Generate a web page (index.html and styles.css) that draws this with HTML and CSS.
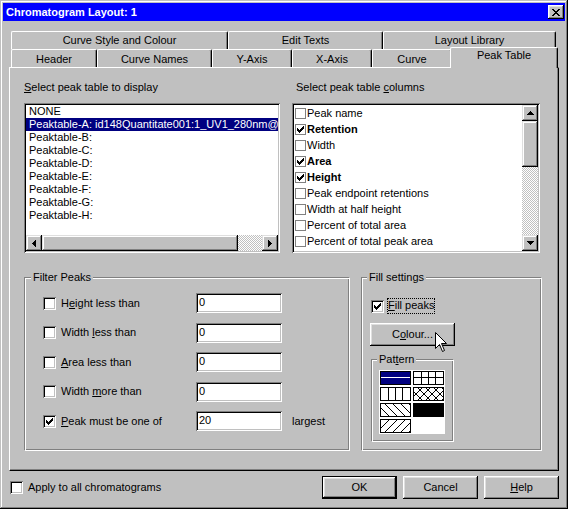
FILE: index.html
```html
<!DOCTYPE html>
<html>
<head>
<meta charset="utf-8">
<title>Chromatogram Layout: 1</title>
<link rel="stylesheet" href="styles.css">
</head>
<body>
<div class="window">
  <div class="titlebar">
    <span class="title">Chromatogram Layout: 1</span>
    <span class="close"><svg width="8" height="7" viewBox="0 0 8 7"><path d="M0 0h2v1H0zM6 0h2v1H6zM1 1h2v1H1zM5 1h2v1H5zM2 2h4v1H2zM3 3h2v1H3zM2 4h4v1H2zM1 5h2v1H1zM5 5h2v1H5zM0 6h2v1H0zM6 6h2v1H6z" fill="#000"/></svg></span>
  </div>
  <div class="content">
    <div class="tabs">
      <div class="tabrow back">
        <div class="tab w-cs">Curve Style and Colour</div>
        <div class="tab w-et">Edit Texts</div>
        <div class="tab w-ll">Layout Library</div>
      </div>
      <div class="tabrow front">
        <div class="tab w-hd">Header</div>
        <div class="tab w-cn">Curve Names</div>
        <div class="tab w-ax">Y-Axis</div>
        <div class="tab w-ax">X-Axis</div>
        <div class="tab w-ax">Curve</div>
        <div class="tab w-pt sel">Peak Table</div>
      </div>
    </div>
    <div class="panel">
      <div class="lists">
        <div class="col">
          <div class="lbl"><u>S</u>elect peak table to display</div>
          <div class="listbox">
            <div class="items">
              <div class="item">NONE</div>
              <div class="item hl">Peaktable-A: id148Quantitate001:1_UV1_280nm@01</div>
              <div class="item">Peaktable-B:</div>
              <div class="item">Peaktable-C:</div>
              <div class="item">Peaktable-D:</div>
              <div class="item">Peaktable-E:</div>
              <div class="item">Peaktable-F:</div>
              <div class="item">Peaktable-G:</div>
              <div class="item">Peaktable-H:</div>
            </div>
            <div class="hscroll">
              <span class="sbtn"><svg width="4" height="7" viewBox="0 0 4 7"><path d="M0 3h1v1H0zM1 2h1v3H1zM2 1h1v5H2zM3 0h1v7H3z"/></svg></span>
              <span class="thumb hthumb"></span>
              <span class="track"></span>
              <span class="sbtn"><svg width="4" height="7" viewBox="0 0 4 7"><path d="M0 0h1v7H0zM1 1h1v5H1zM2 2h1v3H2zM3 3h1v1H3z"/></svg></span>
            </div>
          </div>
        </div>
        <div class="col">
          <div class="lbl lbl-r">Select peak table <u>c</u>olumns</div>
          <div class="listbox rowbox">
            <div class="items">
              <div class="citem"><span class="mini"></span>Peak name</div>
              <div class="citem b"><span class="mini"><svg width="7" height="7" viewBox="0 0 7 7"><path d="M6 0h1v1H6zM5 1h2v1H5zM0 2h1v1H0zM4 2h3v1H4zM0 3h2v1H0zM3 3h3v1H3zM0 4h5v1H0zM1 5h3v1H1zM2 6h1v1H2z"/></svg></span>Retention</div>
              <div class="citem"><span class="mini"></span>Width</div>
              <div class="citem b"><span class="mini"><svg width="7" height="7" viewBox="0 0 7 7"><path d="M6 0h1v1H6zM5 1h2v1H5zM0 2h1v1H0zM4 2h3v1H4zM0 3h2v1H0zM3 3h3v1H3zM0 4h5v1H0zM1 5h3v1H1zM2 6h1v1H2z"/></svg></span>Area</div>
              <div class="citem b"><span class="mini"><svg width="7" height="7" viewBox="0 0 7 7"><path d="M6 0h1v1H6zM5 1h2v1H5zM0 2h1v1H0zM4 2h3v1H4zM0 3h2v1H0zM3 3h3v1H3zM0 4h5v1H0zM1 5h3v1H1zM2 6h1v1H2z"/></svg></span>Height</div>
              <div class="citem"><span class="mini"></span>Peak endpoint retentions</div>
              <div class="citem"><span class="mini"></span>Width at half height</div>
              <div class="citem"><span class="mini"></span>Percent of total area</div>
              <div class="citem"><span class="mini"></span>Percent of total peak area</div>
            </div>
            <div class="vscroll">
              <span class="sbtn"><svg width="7" height="4" viewBox="0 0 7 4"><path d="M3 0h1v1H3zM2 1h3v1H2zM1 2h5v1H1zM0 3h7v1H0z"/></svg></span>
              <span class="thumb vthumb"></span>
              <span class="track"></span>
              <span class="sbtn"><svg width="7" height="4" viewBox="0 0 7 4"><path d="M0 0h7v1H0zM1 1h5v1H1zM2 2h3v1H2zM3 3h1v1H3z"/></svg></span>
            </div>
          </div>
        </div>
      </div>
      <div class="groups">
        <fieldset class="group filter">
          <legend>Filter Peaks</legend>
          <div class="filters">
            <span class="cb"></span><span>H<u>e</u>ight less than</span><span class="field">0</span><span></span>
            <span class="cb"></span><span>Width <u>l</u>ess than</span><span class="field">0</span><span></span>
            <span class="cb"></span><span><u>A</u>rea less than</span><span class="field">0</span><span></span>
            <span class="cb"></span><span>Width <u>m</u>ore than</span><span class="field">0</span><span></span>
            <span class="cb"><svg width="7" height="7" viewBox="0 0 7 7"><path d="M6 0h1v1H6zM5 1h2v1H5zM0 2h1v1H0zM4 2h3v1H4zM0 3h2v1H0zM3 3h3v1H3zM0 4h5v1H0zM1 5h3v1H1zM2 6h1v1H2z"/></svg></span><span><u>P</u>eak must be one of</span><span class="field">20</span><span class="unit">largest</span>
          </div>
        </fieldset>
        <fieldset class="group fill">
          <legend>Fill settings</legend>
          <div class="fillrow">
            <span class="cb"><svg width="7" height="7" viewBox="0 0 7 7"><path d="M6 0h1v1H6zM5 1h2v1H5zM0 2h1v1H0zM4 2h3v1H4zM0 3h2v1H0zM3 3h3v1H3zM0 4h5v1H0zM1 5h3v1H1zM2 6h1v1H2z"/></svg></span>
            <span class="focus"><u>F</u>ill peaks</span>
          </div>
          <div class="btn colour">C<u>o</u>lour...
            <svg class="cursor" width="12" height="20" viewBox="0 0 12 20"><path d="M0.5 0.5V16.5L4.5 12.5L7.5 19.5L9.5 18.5L6.5 11.5H11.5Z" fill="#fff" stroke="#000" stroke-width="1"/></svg>
          </div>
          <fieldset class="group pattern">
            <legend>Pat<u>t</u>ern</legend>
            <div class="pgrid">
              <svg class="pc" width="31" height="14" viewBox="0 0 31 14"><rect x="0" y="0" width="31" height="14" fill="#000"/><rect x="1" y="1" width="29" height="12" fill="#000080"/><rect x="1" y="6" width="29" height="1" fill="#fff"/></svg>
              <svg class="pc" width="31" height="14" viewBox="0 0 31 14"><rect x="0.5" y="0.5" width="30" height="13" fill="#fff" stroke="#000"/><path d="M1 6.5H30M8.5 1V13M15.5 1V13M22.5 1V13" stroke="#000"/></svg>
              <svg class="pc" width="31" height="14" viewBox="0 0 31 14"><rect x="0.5" y="0.5" width="30" height="13" fill="#fff" stroke="#000"/><path d="M8.5 1V13M15.5 1V13M22.5 1V13" stroke="#000"/></svg>
              <svg class="pc" width="31" height="14" viewBox="0 0 31 14"><defs><clipPath id="c4"><rect x="1" y="1" width="29" height="12"/></clipPath></defs><rect x="0.5" y="0.5" width="30" height="13" fill="#fff" stroke="#000"/><g clip-path="url(#c4)" stroke="#000" shape-rendering="crispEdges"><path d="M-12 14L2 0M-4 14L10 0M4 14L18 0M12 14L26 0M20 14L34 0M28 14L42 0"/><path d="M-12 0L2 14M-4 0L10 14M4 0L18 14M12 0L26 14M20 0L34 14M28 0L42 14"/></g></svg>
              <svg class="pc" width="31" height="14" viewBox="0 0 31 14"><defs><clipPath id="c5"><rect x="1" y="1" width="29" height="12"/></clipPath></defs><rect x="0.5" y="0.5" width="30" height="13" fill="#fff" stroke="#000"/><g clip-path="url(#c5)" stroke="#000" shape-rendering="crispEdges"><path d="M-12 0L2 14M-4 0L10 14M4 0L18 14M12 0L26 14M20 0L34 14M28 0L42 14"/></g></svg>
              <svg class="pc" width="31" height="14" viewBox="0 0 31 14"><rect x="0" y="0" width="31" height="14" fill="#000"/></svg>
              <svg class="pc" width="31" height="14" viewBox="0 0 31 14"><defs><clipPath id="c7"><rect x="1" y="1" width="29" height="12"/></clipPath></defs><rect x="0.5" y="0.5" width="30" height="13" fill="#fff" stroke="#000"/><g clip-path="url(#c7)" stroke="#000" shape-rendering="crispEdges"><path d="M-12 14L2 0M-4 14L10 0M4 14L18 0M12 14L26 0M20 14L34 0M28 14L42 0"/></g></svg>
            </div>
          </fieldset>
        </fieldset>
      </div>
    </div>
    <div class="footer">
      <span class="cb"></span>
      <span class="apply">Apply to all chromatograms</span>
      <span class="spacer"></span>
      <span class="btn default">OK</span>
      <span class="btn">Cancel</span>
      <span class="btn"><u>H</u>elp</span>
    </div>
  </div>
</div>
</body>
</html>
```
FILE: styles.css
```css
* { box-sizing: border-box; }
body {
  margin: 0;
  font-family: "Liberation Sans", Arial, sans-serif;
  font-size: 11px;
  line-height: 13px;
  color: #000;
  background: #c0c0c0;
}
u { text-decoration: underline; text-underline-offset: 1px; }

.window {
  width: 568px;
  height: 509px;
  background: #c0c0c0;
  padding: 3px;
  display: flex;
  flex-direction: column;
  box-shadow: inset -1px -1px #000, inset 1px 1px #c0c0c0, inset -2px -2px #808080, inset 2px 2px #fff;
}

.titlebar {
  height: 18px;
  flex: none;
  background: #0000ff;
  color: #fff;
  font-weight: bold;
  display: flex;
  align-items: center;
  justify-content: space-between;
  padding: 0 1px 0 3px;
}
.close {
  width: 16px;
  height: 14px;
  background: #c0c0c0;
  display: flex;
  align-items: center;
  justify-content: center;
  box-shadow: inset -1px -1px #000, inset 1px 1px #fff, inset -2px -2px #808080, inset 2px 2px #dfdfdf;
}
.close svg { display: block; }

.content {
  flex: 1;
  display: flex;
  flex-direction: column;
  padding: 10px 6px 0;
}

.tabs { display: flex; flex-direction: column; }
.tabrow {
  display: flex;
  align-items: flex-end;
  height: 18px;
  padding-left: 2px;
}
.tab {
  height: 18px;
  flex: none;
  text-align: center;
  white-space: nowrap;
  background: #c0c0c0;
  border-left: 1px solid #fff;
  border-top: 1px solid #fff;
  border-right: 1px solid #000;
  border-top-left-radius: 2px;
  border-top-right-radius: 2px;
  box-shadow: inset -1px 0 #808080;
}
.back .tab { padding-top: 2px; }
.front .tab { padding-top: 3px; }
.front .tab.sel {
  height: 21px;
  margin: 0 -2px -1px;
  padding-top: 1px;
  position: relative;
  z-index: 1;
}
.w-cs { width: 217px; }
.w-et { width: 155px; }
.w-ll { width: 173px; }
.w-hd { width: 86px; }
.w-cn { width: 115px; }
.w-ax { width: 80px; }
.w-pt { width: 108px; }

.panel {
  flex: none;
  height: 404px;
  border-top: 1px solid #fff;
  border-left: 1px solid #fff;
  border-right: 1px solid #000;
  border-bottom: 1px solid #000;
  box-shadow: inset -1px -1px #808080;
  padding: 13px 17px 0 14px;
}

.lists {
  display: grid;
  grid-template-columns: 256px 248px;
  column-gap: 12px;
}
.lbl { height: 13px; margin-bottom: 9px; white-space: nowrap; }
.lbl-r { padding-left: 4px; }

.listbox, .field, .cb {
  background: #fff;
  box-shadow: inset 1px 1px #808080, inset -1px -1px #fff, inset 2px 2px #000, inset -2px -2px #c0c0c0;
}
.listbox {
  height: 150px;
  padding: 2px;
  display: flex;
  flex-direction: column;
}
.listbox .items { flex: 1; overflow: hidden; }
.item {
  height: 13px;
  padding-left: 3px;
  white-space: nowrap;
}
.item.hl { background: #000080; color: #fff; }

.hscroll { height: 16px; display: flex; flex: none; }
.sbtn {
  width: 16px;
  height: 16px;
  flex: none;
  background: #c0c0c0;
  display: flex;
  align-items: center;
  justify-content: center;
  box-shadow: inset -1px -1px #000, inset 1px 1px #dfdfdf, inset -2px -2px #808080, inset 2px 2px #fff;
}
.sbtn svg { display: block; fill: #000; }
.thumb {
  flex: none;
  background: #c0c0c0;
  box-shadow: inset -1px -1px #000, inset 1px 1px #dfdfdf, inset -2px -2px #808080, inset 2px 2px #fff;
}
.hthumb { width: 196px; height: 16px; }
.vthumb { width: 16px; height: 46px; }
.track {
  flex: 1;
  background: repeating-conic-gradient(#c0c0c0 0 25%, #fff 0 50%) 0 0 / 2px 2px;
}

.rowbox { flex-direction: row; }
.rowbox .items { padding-left: 1px; }
.vscroll { width: 16px; display: flex; flex-direction: column; flex: none; }
.citem {
  height: 16px;
  display: flex;
  align-items: center;
  white-space: nowrap;
}
.citem.b { font-weight: bold; }
.mini {
  width: 11px;
  height: 11px;
  flex: none;
  margin-right: 1px;
  border: 1px solid #808080;
  background: #fff;
  display: flex;
  align-items: center;
  justify-content: center;
}
.mini svg { display: block; fill: #000; }

.groups {
  margin-top: 18px;
  height: 180px;
  display: grid;
  grid-template-columns: 326px 181px;
  column-gap: 11px;
}
fieldset.group {
  margin: 0;
  padding: 0;
  min-width: 0;
  border: 1px solid;
  border-color: #808080 #fff #fff #808080;
  box-shadow: inset 1px 1px #fff, inset -1px -1px #808080;
}
fieldset.group legend {
  padding: 0 2px;
  margin-left: 5px;
  line-height: 13px;
  background: #c0c0c0;
}
fieldset.filter legend { margin-left: 6px; }

.filters {
  margin: 9px 0 0 18px;
  display: grid;
  grid-template-columns: 18px 135px 86px auto;
  grid-auto-rows: 20px;
  row-gap: 9.5px;
  align-items: center;
}
.cb {
  width: 13px;
  height: 13px;
  flex: none;
  display: flex;
  align-items: center;
  justify-content: center;
}
.cb svg { display: block; fill: #000; }
.field {
  height: 20px;
  padding: 3px 0 0 3px;
}
.unit { padding-left: 10px; }

.fillrow {
  display: flex;
  height: 16px;
  align-items: flex-start;
  margin: 14px 0 0 9px;
}
.fillrow .cb { margin-top: 2px; }
.focus {
  margin-left: 3px;
  height: 16px;
  padding: 1px 1px 0 1px;
  white-space: nowrap;
  outline: 1px dotted #000;
  outline-offset: -1px;
}

.btn {
  height: 23px;
  background: #c0c0c0;
  display: flex;
  align-items: center;
  justify-content: center;
  box-shadow: inset -1px -1px #000, inset 1px 1px #fff, inset -2px -2px #808080, inset 2px 2px #dfdfdf;
}
.colour {
  margin: 9px 0 0 8px;
  width: 85px;
  position: relative;
}
.cursor { position: absolute; left: 65px; top: 9px; }

fieldset.pattern {
  width: 83px;
  margin: 7px 0 0 9px;
}
.pgrid {
  margin: 4px 0 7px 7px;
  width: 66px;
  height: 64px;
  background: #fff;
  padding: 1px;
  display: grid;
  grid-template-columns: 31px 31px;
  grid-auto-rows: 14px;
  gap: 2px;
}
.pc { display: block; }

.footer {
  display: flex;
  align-items: center;
  padding-top: 5px;
}
.footer .cb { margin-left: 1px; }
.apply { margin-left: 5px; }
.spacer { flex: 1; }
.footer .btn { width: 75px; margin-left: 6px; }
.footer .btn.default {
  border: 1px solid #000;
  margin-left: 0;
}
```
